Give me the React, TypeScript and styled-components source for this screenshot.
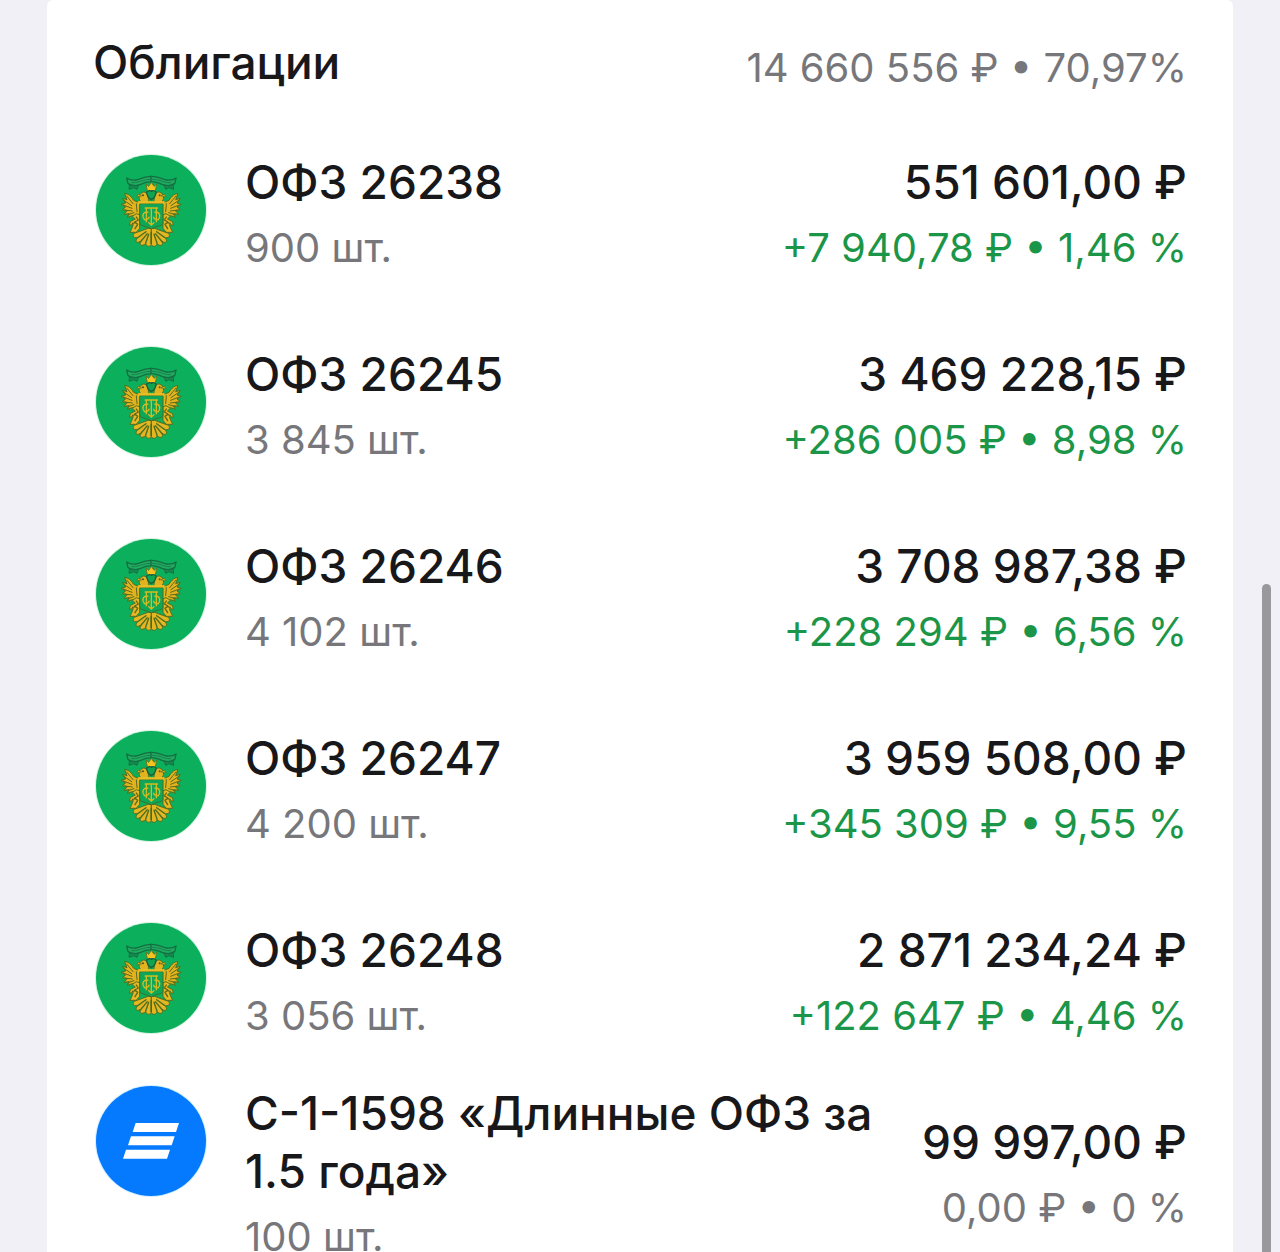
import React from 'react';
import styled, { createGlobalStyle } from 'styled-components';

type Issuer = 'ministry' | 'fund';

interface IBond {
  id: number;
  name: string;
  amount: string;
  value: string;
  change: string;
  issuer: Issuer;
  isProfit: boolean;
}

const bonds: IBond[] = [
  { id: 1, name: 'ОФЗ 26238', amount: '900 шт.', value: '551 601,00 ₽', change: '+7 940,78 ₽ • 1,46 %', issuer: 'ministry', isProfit: true },
  { id: 2, name: 'ОФЗ 26245', amount: '3 845 шт.', value: '3 469 228,15 ₽', change: '+286 005 ₽ • 8,98 %', issuer: 'ministry', isProfit: true },
  { id: 3, name: 'ОФЗ 26246', amount: '4 102 шт.', value: '3 708 987,38 ₽', change: '+228 294 ₽ • 6,56 %', issuer: 'ministry', isProfit: true },
  { id: 4, name: 'ОФЗ 26247', amount: '4 200 шт.', value: '3 959 508,00 ₽', change: '+345 309 ₽ • 9,55 %', issuer: 'ministry', isProfit: true },
  { id: 5, name: 'ОФЗ 26248', amount: '3 056 шт.', value: '2 871 234,24 ₽', change: '+122 647 ₽ • 4,46 %', issuer: 'ministry', isProfit: true },
  { id: 6, name: 'С-1-1598 «Длинные ОФЗ за 1.5 года»', amount: '100 шт.', value: '99 997,00 ₽', change: '0,00 ₽ • 0 %', issuer: 'fund', isProfit: false },
];

const GlobalStyle = createGlobalStyle`
  * {
    box-sizing: border-box;
  }

  body {
    background-color: #f0f0f6;
    color: #18181a;
    font-family: Inter, 'Liberation Sans', sans-serif;
    margin: 0;
  }
`;

const Screen = styled.main`
  height: 100vh;
  overflow: hidden;
  padding: 0 47px;
  position: relative;
`;

const Card = styled.section`
  background-color: #fff;
  border-radius: 6px;
  padding: 33px 46px;
`;

const CardHeader = styled.header`
  align-items: flex-end;
  display: flex;
  justify-content: space-between;
  padding-bottom: 24px;
`;

const Heading = styled.h2`
  font-size: 46px;
  font-weight: 500;
  line-height: 58px;
  margin: 0;
  padding-bottom: 2px;
`;

const Caption = styled.p<{ $profit?: boolean }>`
  color: ${({ $profit }) => ($profit ? '#1b9648' : '#77777b')};
  font-size: 40px;
  line-height: 50px;
  margin: 0;
  white-space: nowrap;
`;

const List = styled.ul`
  list-style: none;
  margin: 0;
  padding: 0 0 0 2px;
`;

const Row = styled.li`
  align-content: center;
  align-items: center;
  column-gap: 38px;
  display: grid;
  grid-template-columns: 112px 1fr auto;
  min-height: 192px;
  padding: 7px 0;
`;

const Logo = styled.svg`
  align-self: start;
  display: block;
  height: 112px;
  margin-top: 1px;
  width: 112px;
`;

const Texts = styled.div<{ $end?: boolean }>`
  display: flex;
  flex-direction: column;
  gap: 12px;
  text-align: ${({ $end }) => ($end ? 'right' : 'left')};
`;

const Title = styled.h3`
  font-size: 46px;
  font-weight: 500;
  line-height: 58px;
  margin: 0;
`;

const Value = styled.p`
  font-size: 46px;
  font-weight: 500;
  line-height: 58px;
  margin: 0;
  white-space: nowrap;
`;

const ScrollThumb = styled.div`
  background-color: #98989d;
  border-radius: 5px 5px 0 0;
  bottom: 0;
  position: absolute;
  right: 9px;
  top: 584px;
  width: 9px;
`;

// One side of the eagle, drawn twice around x = 196
function EagleHalf() {
  return (
    <g strokeLinejoin="round" strokeLinecap="round">
      <path
        d="M162 167 C156 158 160 145 172 141 C180 140 183 146 186 152 L188 166 L186 178 H164 L162 212 L150 218 L138 212 L124 217 L130 206 L114 208 L124 197 L109 194 L119 186 L106 178 L119 174 L109 160 L123 164 L116 146 C126 145 135 153 143 166 L158 172 Z"
        fill="#e0b31f"
        stroke="#4f6f22"
        strokeWidth="3"
      />
      <path d="M122 153 L141 176 M114 166 L137 182 M112 180 L138 190 M116 195 L139 198 M125 209 L144 203 M151 176 L153 200" fill="none" stroke="#5f6a1c" strokeWidth="3" />
      <path d="M166 153 L151 156 L157 148 Z" fill="#d9aa1e" stroke="#5d6c20" strokeWidth="2" />
      <path d="M150 207 L139 214 L148 222 L134 229 L129 240 L142 239 L136 254 L132 262 L151 262 L161 250 V210 Z" fill="#e8b923" stroke="#56701f" strokeWidth="3" />
      <path d="M151 216 L157 225 L146 231 L155 238 L147 251 M139 235 L149 233" fill="none" stroke="#5c671b" strokeWidth="4" />
      <path
        d="M186 250 L170 256 L144 265 C138 275 145 281 157 277 C144 288 151 296 163 290 C159 301 170 306 179 295 C180 304 190 308 196 299 V252 Z"
        fill="#e3b622"
        stroke="#4f7022"
        strokeWidth="3"
      />
      <path d="M180 260 L157 277 M184 266 L163 291 M188 268 L179 294 M196 262 V296" fill="none" stroke="#4b6c20" strokeWidth="4" />
      <path d="M131 116 L129 133 L143 128 L153 133 L157 121 Z" fill="#168d50" stroke="#176e43" strokeWidth="3" />
      <path d="M122 99 C132 106 145 107 157 103 C170 98 181 94 197 94 V110 C184 110 172 115 160 119 C149 123 136 122 126 116 Z" fill="#22aa5e" stroke="#136f43" strokeWidth="4" />
      <path d="M137 113 C155 115 169 103 194 103" fill="none" stroke="#168550" strokeWidth="3" />
      <circle cx="171" cy="151" r="3" fill="#4a5a24" />
    </g>
  );
}

function MinistryLogo() {
  return (
    <Logo viewBox="27 27 336 336" aria-hidden="true">
      <circle cx="195" cy="195" r="168" fill="#d2f4df" />
      <circle cx="195" cy="195" r="165" fill="#0baf5c" />
      <EagleHalf />
      <g transform="translate(392 0) scale(-1 1)">
        <EagleHalf />
      </g>
      <path d="M180 117 L188 124 L196 112 L204 124 L212 117 L208 138 H184 Z" fill="#f4c421" stroke="#677721" strokeWidth="3" />
      <path d="M182 141 C188 136 193 136 196 139 C199 136 204 136 210 141 C210 153 204 159 196 164 C188 159 182 153 182 141 Z" fill="#10a354" stroke="#176137" strokeWidth="4" />
      <path d="M161 176 H231 V232 C231 246 209 242 196 252 C183 242 161 246 161 232 Z" fill="#0ca858" stroke="#3f702a" strokeWidth="3" />
      <path d="M156 172 H236" fill="none" stroke="#eabd25" strokeWidth="7" />
      <path
        d="M181 232 V190 M211 232 V190 M176 189 H187 M205 189 H216 M187 189 H205 M196 189 V238 M187 202 C171 197 167 214 175 223 C182 227 188 221 190 215 M205 202 C221 197 225 214 217 223 C210 227 204 221 202 215 M187 232 L196 240 L205 232"
        fill="none"
        stroke="#d2ba22"
        strokeWidth="4"
      />
    </Logo>
  );
}

function FundLogo() {
  return (
    <Logo viewBox="27 27 336 336" aria-hidden="true">
      <circle cx="195" cy="195" r="168" fill="#d3f0fb" />
      <circle cx="195" cy="195" r="165" fill="#057aff" />
      <path d="M149 141 H279 L270 168 H140 Z M135 181 H266 L257 208 H126 Z M120 221 H252 L243 248 H111 Z" fill="#fff" />
    </Logo>
  );
}

function BondRow({ bond }: { bond: IBond }) {
  return (
    <Row>
      { bond.issuer === 'ministry' ? <MinistryLogo /> : <FundLogo /> }
      <Texts>
        <Title>{ bond.name }</Title>
        <Caption>{ bond.amount }</Caption>
      </Texts>
      <Texts $end>
        <Value>{ bond.value }</Value>
        <Caption $profit={ bond.isProfit }>{ bond.change }</Caption>
      </Texts>
    </Row>
  );
}

function App() {
  return (
    <Screen>
      <GlobalStyle />
      <Card>
        <CardHeader>
          <Heading>Облигации</Heading>
          <Caption>14 660 556 ₽ • 70,97%</Caption>
        </CardHeader>
        <List>
          { bonds.map(bond => <BondRow key={ bond.id } bond={ bond } />) }
        </List>
      </Card>
      <ScrollThumb />
    </Screen>
  );
}

export default App;
